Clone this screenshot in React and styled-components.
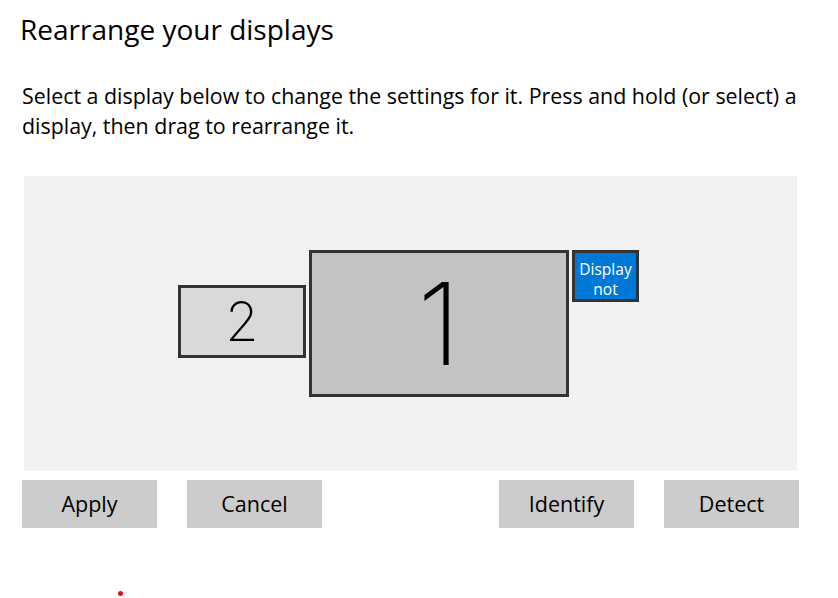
import React from "react";
import styled, { createGlobalStyle } from "styled-components";

// ----------------------------------------

const GlobalStyle = createGlobalStyle`
  body {
    margin: 0;
    background: #ffffff;
    font-family: "Open Sans", "Noto Sans", sans-serif;
    color: #000000;
  }
`;

const Page = styled.div`
  width: 838px;
  height: 598px;
  overflow: hidden;
  padding: 10px 0 0 20px;
  box-sizing: border-box;
`;

const Title = styled.h1`
  margin: 0;
  font-size: 28px;
  font-weight: 400;
  line-height: 38px;
`;

const Description = styled.p`
  margin: 33px 0 0 2px;
  width: 800px;
  font-size: 21.4px;
  line-height: 30px;
`;

const Canvas = styled.div`
  position: relative;
  margin: 35px 0 0 4px;
  width: 773px;
  height: 295px;
  background: #f2f2f2;
`;

const Monitor = styled.div`
  position: absolute;
  box-sizing: border-box;
  display: flex;
  align-items: center;
  justify-content: center;
  border: 3px solid #333333;
  left: ${(props) => props.x}px;
  top: ${(props) => props.y}px;
  width: ${(props) => props.w}px;
  height: ${(props) => props.h}px;
  background: ${(props) => props.bg};
  color: ${(props) => props.fg || "#000"};
`;

const Number = styled.span`
  font-family: "Inter", sans-serif;
  font-weight: 200;
  font-size: ${(props) => props.size}px;
  line-height: 1;
`;

const Tag = styled.span`
  font-size: 15.5px;
  line-height: 20px;
  text-align: center;
  margin-top: 6px;
`;

const Actions = styled.div`
  display: flex;
  margin: 9px 0 0 2px;
  width: 777px;
`;

const Button = styled.button`
  width: 135px;
  height: 48px;
  border: none;
  background: #cccccc;
  font-family: "Open Sans", "Noto Sans", sans-serif;
  font-size: 21.5px;
  color: #000;
  padding: 0 0 2px;
  margin-left: ${(props) => props.ml || 0}px;
`;

const Dot = styled.div`
  width: 5px;
  height: 5px;
  border-radius: 50%;
  background: #d4141a;
  margin: 63px 0 0 98px;
`;

// -------------------------------------

const App = () => {
  return (
    <Page>
      <GlobalStyle />
      <Title>Rearrange your displays</Title>
      <Description>
        Select a display below to change the settings for it. Press and hold
        (or select) a display, then drag to rearrange it.
      </Description>

      <Canvas>
        <Monitor x={154} y={109} w={128} h={73} bg="#d9d9d9">
          <Number size={54}>2</Number>
        </Monitor>
        <Monitor x={285} y={74} w={260} h={147} bg="#c3c3c3">
          <Number size={114}>1</Number>
        </Monitor>
        <Monitor x={548} y={74} w={67} h={52} bg="#0078d7" fg="#ffffff">
          <Tag>
            Display
            <br />
            not
          </Tag>
        </Monitor>
      </Canvas>

      <Actions>
        <Button>Apply</Button>
        <Button ml={30}>Cancel</Button>
        <Button ml={177}>Identify</Button>
        <Button ml={30}>Detect</Button>
      </Actions>

      <Dot />
    </Page>
  );
};

export default App;
